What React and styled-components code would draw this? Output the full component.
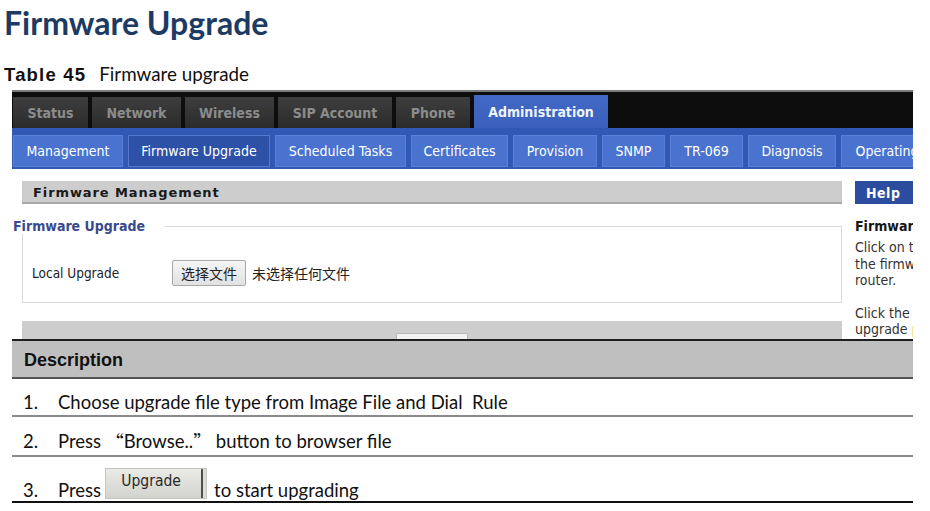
import React from 'react';
import styled, { createGlobalStyle } from 'styled-components';

const GlobalStyle = createGlobalStyle`
  body {
    margin: 0;
    background: #fff;
    font-family: Lato, "Liberation Sans", sans-serif;
  }
`;

const UI_FONT = `"DejaVu Sans Condensed", "DejaVu Sans", sans-serif`;
const CJK_FONT = `"Noto Sans CJK SC", sans-serif`;

const Page = styled.div`
  width: 930px;
  padding: 4px 0 0 4px;
  box-sizing: border-box;
`;

const Title = styled.h1`
  margin: 0;
  font: 700 32px/38px Lato, sans-serif;
  color: #1c3a64;
`;

const Caption = styled.div`
  margin-top: 20px;
  display: flex;
  align-items: baseline;
  gap: 13px;
  line-height: 22px;
`;

const CaptionNum = styled.span`
  font: 700 18.5px "Liberation Sans", sans-serif;
  letter-spacing: 1.2px;
  color: #111;
`;

const CaptionText = styled.span`
  font: 400 18.8px Lato, sans-serif;
  color: #111;
`;

const Table = styled.div`
  margin: 4px 0 0 8px;
  width: 901px;
`;

const Shot = styled.div`
  border-top: 2px solid #7a7a7a;
  height: 247px;
  overflow: hidden;
  background: #fff;
  font-family: ${UI_FONT};
`;

const TopBar = styled.div`
  height: 36px;
  display: flex;
  align-items: flex-end;
  gap: 4px;
  padding-left: 1px;
  background: #0d0d0d;
`;

const TopTab = styled.div`
  flex-shrink: 0;
  width: ${({ $w }) => $w}px;
  height: ${({ $active }) => ($active ? 33 : 31)}px;
  display: flex;
  align-items: center;
  justify-content: center;
  font-size: 14px;
  font-weight: 700;
  color: ${({ $active }) => ($active ? '#eef2fb' : '#8c8c8c')};
  background: ${({ $active }) =>
    $active ? 'linear-gradient(#4369c6, #3a60bc)' : 'linear-gradient(#3e3e3e, #2b2b2b)'};
`;

const SubBar = styled.div`
  height: 41px;
  box-sizing: border-box;
  display: flex;
  gap: 5px;
  padding: 7px 0 2px 1px;
  background: #3158b2;
`;

const SubTab = styled.div`
  flex-shrink: 0;
  width: ${({ $w }) => $w}px;
  box-sizing: border-box;
  display: flex;
  align-items: center;
  justify-content: center;
  font-size: 14px;
  color: #fff;
  white-space: nowrap;
  background: ${({ $active }) => ($active ? '#2d51a6' : '#4a73cf')};
  border: 1px solid ${({ $active }) => ($active ? '#5479cc' : '#5a80d6')};
`;

const Content = styled.div`
  display: flex;
  gap: 13px;
  padding: 12px 0 0 10px;
`;

const Main = styled.div`
  width: 820px;
  flex-shrink: 0;
`;

const SectionBar = styled.div`
  height: 23px;
  box-sizing: border-box;
  display: flex;
  align-items: center;
  padding: 2px 0 0 11px;
  background: #cdcdcd;
  border-bottom: 2px solid #a8a8a8;
  font-family: "DejaVu Sans", sans-serif;
  font-size: 13px;
  font-weight: 700;
  letter-spacing: 0.9px;
  color: #1a1a1a;
`;

const Fieldset = styled.fieldset`
  margin: 14px 0 0;
  padding: 0;
  border: 1px solid #d9d9d9;
  min-width: 0;
`;

const Legend = styled.legend`
  margin-left: -10px;
  padding: 0 20px 0 0;
  font-size: 14px;
  font-weight: 700;
  line-height: 16px;
  color: #3b4a8c;
  background: #fff;
`;

const FieldRow = styled.div`
  display: flex;
  align-items: center;
  padding: 26px 0 16px 9px;
`;

const FieldLabel = styled.span`
  width: 140px;
  font-size: 13.5px;
  color: #222;
`;

const FileButton = styled.button`
  height: 26px;
  padding: 0 8px;
  border: 1px solid #a8a8a8;
  border-radius: 2px;
  background: linear-gradient(#f5f5f5, #e1e1e1);
  font: 14px ${CJK_FONT};
  color: #222;
`;

const NoFile = styled.span`
  margin-left: 6px;
  font: 14px ${CJK_FONT};
  color: #222;
`;

const ActionBar = styled.div`
  margin-top: 18px;
  height: 30px;
  padding-top: 12px;
  display: flex;
  justify-content: center;
  background: #cdcdcd;
`;

const ActionButton = styled.div`
  width: 70px;
  height: 22px;
  background: #f2f2f2;
  border: 1px solid #b9b9b9;
  border-radius: 2px;
`;

const Help = styled.div`
  width: 190px;
  flex-shrink: 0;
`;

const HelpHead = styled.div`
  height: 23px;
  display: flex;
  align-items: center;
  padding-left: 11px;
  background: #2c4d9e;
  color: #fff;
  font-size: 14px;
  font-weight: 700;
  letter-spacing: 0.5px;
`;

const HelpTitle = styled.div`
  margin-top: 14px;
  font-size: 14px;
  font-weight: 700;
  line-height: 16px;
  color: #151515;
`;

const HelpText = styled.p`
  margin: ${({ $gap }) => $gap}px 0 0;
  font-size: 14px;
  line-height: 16.5px;
  color: #333;
  white-space: nowrap;
`;

const Accent = styled.span`
  color: #c8661a;
`;

const DescHead = styled.div`
  height: 40px;
  box-sizing: border-box;
  display: flex;
  align-items: center;
  padding: 2px 0 0 12px;
  background: #bfbfbf;
  border-top: 2px solid #1e1e1e;
  border-bottom: 2px solid #555;
  font: 700 18px "Liberation Sans", sans-serif;
  color: #111;
`;

const Row = styled.div`
  height: ${({ $h }) => $h}px;
  box-sizing: border-box;
  display: flex;
  align-items: flex-end;
  padding: 0 0 ${({ $pb }) => $pb}px 11px;
  border-bottom: 2px solid ${({ $last }) => ($last ? '#111' : '#8a8a8a')};
  font: 400 18.5px/22px Lato, sans-serif;
  color: #111;
  white-space: pre;
`;

const RowNum = styled.span`
  width: 35px;
  flex-shrink: 0;
`;

const Quote = styled.span`
  font-family: ${CJK_FONT};
`;

const UpgradePic = styled.span`
  width: 102px;
  height: 31px;
  box-sizing: border-box;
  margin: 0 7px 2px 4px;
  display: inline-flex;
  justify-content: center;
  padding: 2px 10px 0 0;
  background: linear-gradient(#e9e9e5, #d3d3cf);
  border: 1px solid #c4c4c0;
  box-shadow: inset -3px 0 0 #dcdcd8, inset -5px 0 0 #4e4e4e;
  font: 15.5px/20px ${UI_FONT};
  color: #2a2a2a;
`;

const topTabs = [
  { label: 'Status', w: 75 },
  { label: 'Network', w: 89 },
  { label: 'Wireless', w: 89 },
  { label: 'SIP Account', w: 114 },
  { label: 'Phone', w: 74 },
  { label: 'Administration', w: 134, active: true },
];

const subTabs = [
  { label: 'Management', w: 110 },
  { label: 'Firmware Upgrade', w: 142, active: true },
  { label: 'Scheduled Tasks', w: 131 },
  { label: 'Certificates', w: 97 },
  { label: 'Provision', w: 84 },
  { label: 'SNMP', w: 63 },
  { label: 'TR-069', w: 73 },
  { label: 'Diagnosis', w: 88 },
  { label: 'Operating Info', w: 120 },
];

const App = () => (
  <Page>
    <GlobalStyle />
    <Title>Firmware Upgrade</Title>
    <Caption>
      <CaptionNum>Table 45</CaptionNum>
      <CaptionText>Firmware upgrade</CaptionText>
    </Caption>

    <Table>
      <Shot>
        <TopBar>
          {topTabs.map((t) => (
            <TopTab key={t.label} $w={t.w} $active={t.active}>
              {t.label}
            </TopTab>
          ))}
        </TopBar>
        <SubBar>
          {subTabs.map((t) => (
            <SubTab key={t.label} $w={t.w} $active={t.active}>
              {t.label}
            </SubTab>
          ))}
        </SubBar>
        <Content>
          <Main>
            <SectionBar>Firmware Management</SectionBar>
            <Fieldset>
              <Legend>Firmware Upgrade</Legend>
              <FieldRow>
                <FieldLabel>Local Upgrade</FieldLabel>
                <FileButton>选择文件</FileButton>
                <NoFile>未选择任何文件</NoFile>
              </FieldRow>
            </Fieldset>
            <ActionBar>
              <ActionButton />
            </ActionBar>
          </Main>
          <Help>
            <HelpHead>Help</HelpHead>
            <HelpTitle>Firmware Upgrade</HelpTitle>
            <HelpText $gap={5}>
              Click on the Browse button to
              <br />
              the firmware file to upgrade the
              <br />
              router.
            </HelpText>
            <HelpText $gap={16}>
              Click the Upgrade button to
              <br />
              upgrade <Accent>process</Accent>
            </HelpText>
          </Help>
        </Content>
      </Shot>

      <DescHead>Description</DescHead>
      <Row $h={38} $pb={2}>
        <RowNum>1.</RowNum>
        Choose upgrade file type from Image File and Dial  Rule
      </Row>
      <Row $h={40} $pb={3}>
        <RowNum>2.</RowNum>
        Press<Quote> “</Quote>Browse..<Quote>” </Quote>button to browser file
      </Row>
      <Row $h={46} $pb={0} $last>
        <RowNum>3.</RowNum>
        Press
        <UpgradePic>Upgrade</UpgradePic>
        to start upgrading
      </Row>
    </Table>
  </Page>
);

export default App;
